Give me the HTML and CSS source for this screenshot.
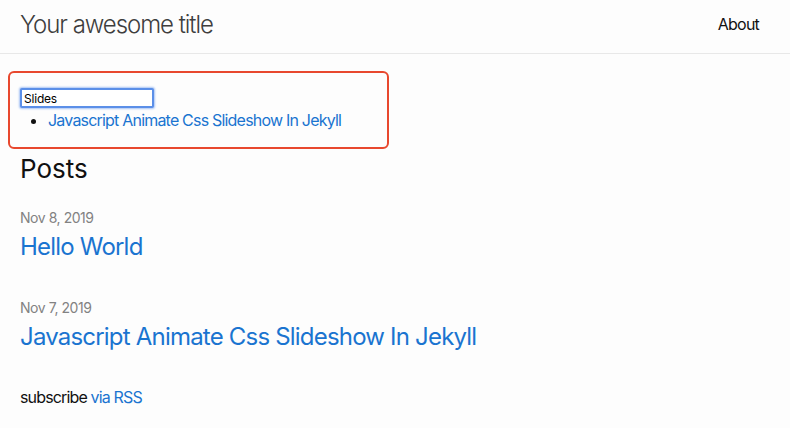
FILE: index.html
```html
<!DOCTYPE html>
<html>
<head>
<meta charset="utf-8">
<link rel="stylesheet" href="styles.css">
</head>
<body>
<header class="site-header">
  <div class="header-wrap">
    <a class="site-title" href="#">Your awesome title</a>
    <nav class="site-nav"><a class="page-link" href="#">About</a></nav>
  </div>
</header>
<div class="slides-box">
  <input class="slides-input" type="text" value="Slides">
  <ul class="slides-list">
    <li><a href="#">Javascript Animate Css Slideshow In Jekyll</a></li>
  </ul>
</div>
<main class="page-content">
  <h2 class="post-list-heading">Posts</h2>
  <ul class="post-list">
    <li class="post-item">
      <span class="post-meta">Nov 8, 2019</span>
      <h3 class="post-title"><a href="#">Hello World</a></h3>
    </li>
    <li class="post-item">
      <span class="post-meta">Nov 7, 2019</span>
      <h3 class="post-title"><a href="#">Javascript Animate Css Slideshow In Jekyll</a></h3>
    </li>
  </ul>
  <p class="rss-subscribe">subscribe <a href="#">via RSS</a></p>
</main>
</body>
</html>
```
FILE: styles.css
```css
html, body {
  margin: 0;
  padding: 0;
}
body {
  background: #fdfdfd;
  color: #111;
  font-family: Inter, "Noto Sans", sans-serif;
  font-size: 16px;
  line-height: 1.5;
}
a {
  color: #1a74d0;
  text-decoration: none;
}
.site-header {
  border-bottom: 1px solid #e8e8e8;
  height: 53px;
}
.header-wrap {
  display: flex;
  justify-content: space-between;
  align-items: center;
  height: 49px;
  padding: 0 31px 0 20px;
}
.site-title {
  font-size: 24px;
  font-weight: 300;
  letter-spacing: -1.05px;
  color: #3e3e3e;
}
.site-nav {
  margin-bottom: 2px;
}
.page-link {
  color: #111;
  font-size: 16px;
  letter-spacing: -0.8px;
}
.slides-box {
  margin: 17px 0 0 8px;
  width: 377px;
  height: 74px;
  border: 2px solid #e8482e;
  border-radius: 6px;
  padding: 0;
  box-sizing: content-box;
}
.slides-input {
  display: block;
  margin: 15px 0 0 10px;
  width: 126px;
  height: 14px;
  padding: 1px 2px;
  font-family: Inter, "Noto Sans", sans-serif;
  font-size: 12px;
  letter-spacing: -0.2px;
  border: 2px solid #5b8fe8;
  border-radius: 2px;
  box-shadow: 0 0 2px 1px #a8c4f4;
  outline: none;
  background: #fff;
  color: #000;
}
.slides-list {
  margin: 1px 0 0;
  padding-left: 38px;
}
.slides-list li {
  font-size: 16px;
  line-height: 22px;
  letter-spacing: -0.8px;
}
.page-content {
  padding: 0 20px;
}
.post-list-heading {
  font-size: 26px;
  font-weight: 400;
  margin: 2px 0 0;
  line-height: 36px;
}
.post-list {
  list-style: none;
  margin: 0;
  padding: 0;
}
.post-item {
  margin-top: 20px;
}
.post-item + .post-item {
  margin-top: 32px;
}
.post-meta {
  display: block;
  font-size: 14px;
  color: #828282;
  line-height: 21px;
  letter-spacing: -0.45px;
  margin-bottom: 1px;
}
.post-title {
  margin: 0;
  font-size: 24px;
  font-weight: 400;
  line-height: 36px;
  letter-spacing: -0.8px;
}
.rss-subscribe {
  margin: 30px 0 0;
  font-size: 16px;
  letter-spacing: -0.85px;
}
```
